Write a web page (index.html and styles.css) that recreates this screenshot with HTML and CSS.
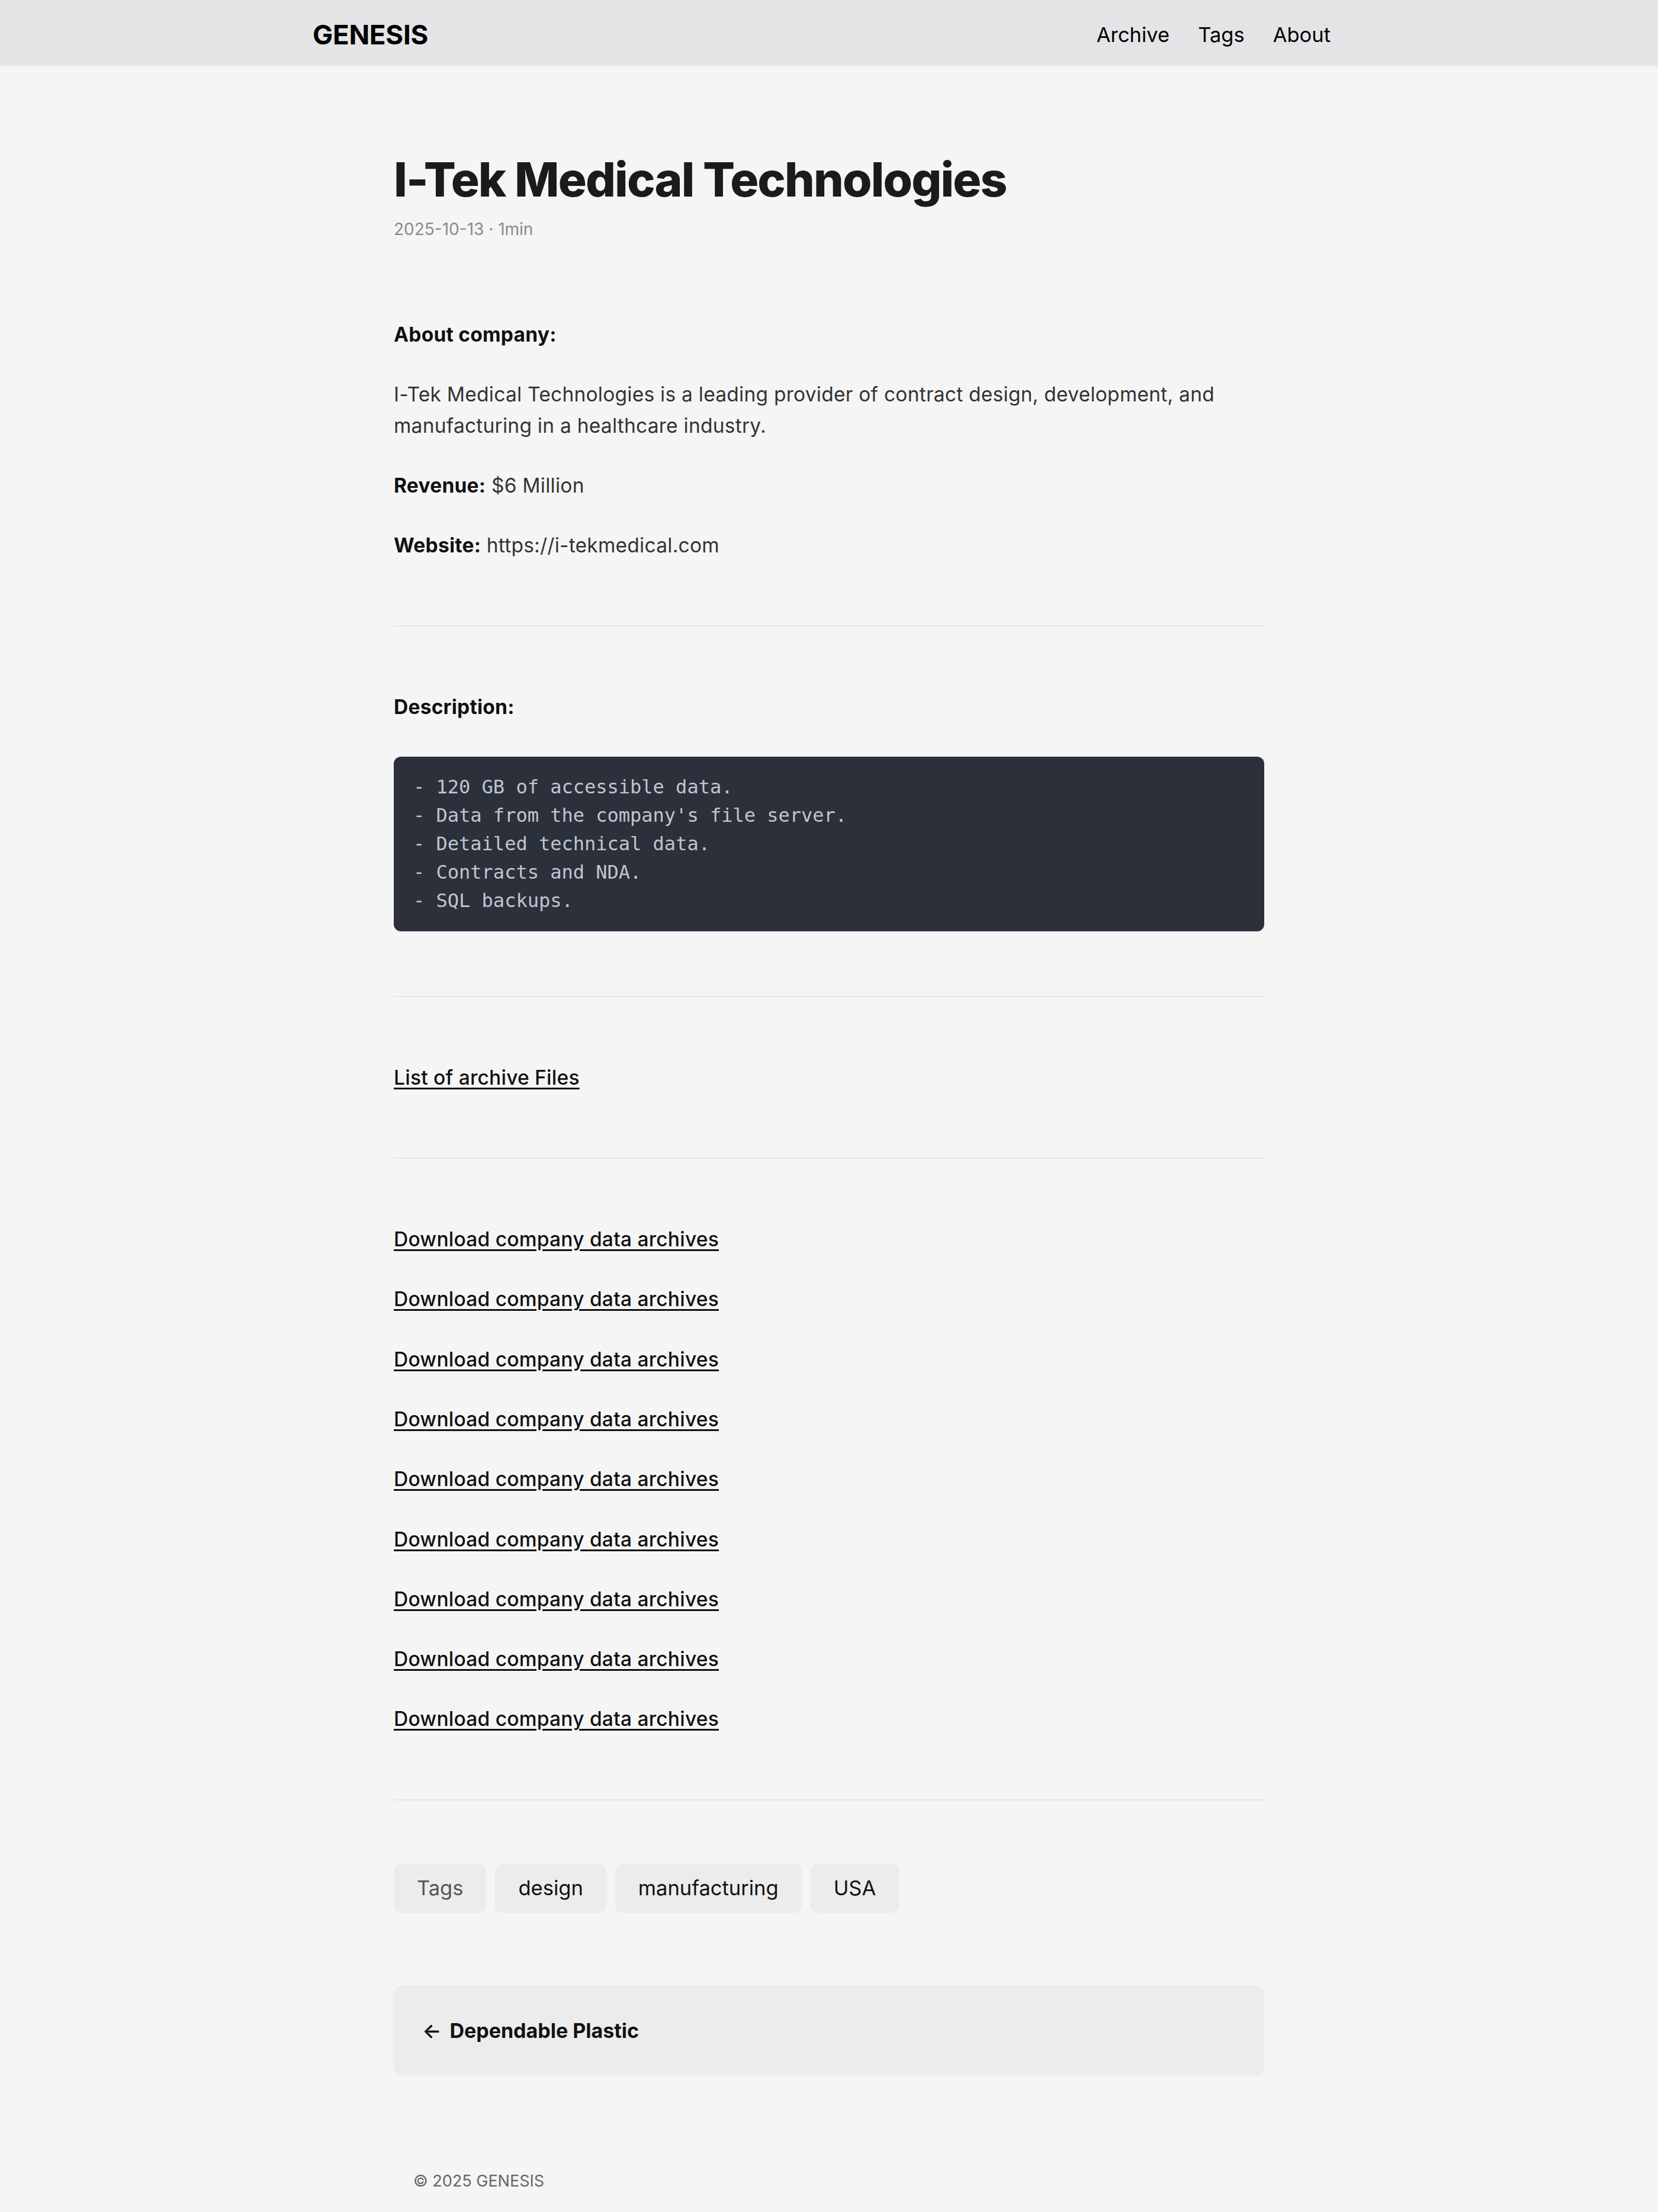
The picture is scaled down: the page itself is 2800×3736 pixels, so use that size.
FILE: index.html
```html
<!DOCTYPE html>
<html lang="en">
<head>
<meta charset="utf-8">
<title>I-Tek Medical Technologies | GENESIS</title>
<link rel="stylesheet" href="styles.css">
</head>
<body>
<header class="site-header">
  <nav class="nav">
    <a class="logo" href="#">GENESIS</a>
    <ul class="menu">
      <li><a href="#">Archive</a></li>
      <li><a href="#">Tags</a></li>
      <li><a href="#">About</a></li>
    </ul>
  </nav>
</header>

<main class="main">
  <article class="post">
    <header class="post-header">
      <h1 class="post-title">I-Tek Medical Technologies</h1>
      <div class="post-meta">2025-10-13&nbsp;·&nbsp;1min</div>
    </header>

    <div class="post-content">
      <p><strong>About company:</strong></p>
      <p>I-Tek Medical Technologies is a leading provider of contract design, development, and manufacturing in a healthcare industry.</p>
      <p><strong>Revenue:</strong> $6 Million</p>
      <p><strong>Website:</strong> https://i-tekmedical.com</p>
      <hr>
      <p><strong>Description:</strong></p>
      <pre class="code"><code>- 120 GB of accessible data.
- Data from the company's file server.
- Detailed technical data.
- Contracts and NDA.
- SQL backups.</code></pre>
      <hr>
      <p><a href="#">List of archive Files</a></p>
      <hr>
      <p><a href="#">Download company data archives</a></p>
      <p><a href="#">Download company data archives</a></p>
      <p><a href="#">Download company data archives</a></p>
      <p><a href="#">Download company data archives</a></p>
      <p><a href="#">Download company data archives</a></p>
      <p><a href="#">Download company data archives</a></p>
      <p><a href="#">Download company data archives</a></p>
      <p><a href="#">Download company data archives</a></p>
      <p><a href="#">Download company data archives</a></p>
      <hr>
    </div>

    <footer class="post-footer">
      <ul class="post-tags">
        <li class="tag-label">Tags</li>
        <li><a href="#">design</a></li>
        <li><a href="#">manufacturing</a></li>
        <li><a href="#">USA</a></li>
      </ul>
      <nav class="paginav">
        <a class="prev" href="#"><span class="arrow">←</span><span>Dependable Plastic</span></a>
      </nav>
    </footer>
  </article>
</main>

<footer class="site-footer">
  <span>© 2025 GENESIS</span>
</footer>
</body>
</html>
```

FILE: styles.css
```css
html {
  background: #f5f5f5;
}

body {
  margin: 0;
  background: #f5f5f5;
  font-family: Inter, "Noto Sans", "Liberation Sans", sans-serif;
  color: #1e1e1e;
}

a {
  color: inherit;
  text-decoration: none;
}

/* ---------- site header ---------- */
.site-header {
  height: 110px;
  box-sizing: border-box;
  padding-top: 6px;
  background: #e4e4e6;
  box-shadow: 0 2px 6px rgba(0, 0, 0, 0.05);
  display: flex;
  align-items: center;
}

.nav {
  width: 1744px;
  margin: 0 auto;
  padding-right: 25px;
  box-sizing: border-box;
  display: flex;
  align-items: center;
  justify-content: space-between;
}

.logo {
  font-size: 45.5px;
  font-weight: 700;
  color: #000;
  letter-spacing: -0.2px;
}

.menu {
  list-style: none;
  margin: 0;
  padding: 0;
  display: flex;
  gap: 48px;
}

.menu a {
  font-size: 34.5px;
  color: #000;
}

/* ---------- main ---------- */
.main {
  width: 1470px;
  margin: 0 auto;
  padding-top: 141px;
}

.post-title {
  margin: 0;
  font-size: 80px;
  line-height: 104px;
  font-weight: 800;
  letter-spacing: -1.85px;
  color: #1b1b1b;
}

.post-meta {
  margin-top: 12px;
  font-size: 28px;
  line-height: 40px;
  color: #8a8a8a;
}

.post-content {
  margin-top: 132px;
  font-size: 33.5px;
  line-height: 52.3px;
  letter-spacing: 0.25px;
  color: #333;
}

.post-content p {
  margin: 0 0 49px;
}

.post-content strong {
  font-weight: 650;
  color: #111;
}

.post-content a {
  color: #111;
  font-weight: 500;
  text-decoration: underline;
  text-decoration-thickness: 3px;
  text-underline-offset: 5px;
}

.post-content hr {
  border: 0;
  height: 2px;
  background: #e6e6e6;
  margin: 109px 0 110px;
}

.post-content hr:last-child {
  margin-bottom: 0;
}

.code {
  margin: 57px 0 0;
  padding: 27px 33px 28px;
  background: #2b303b;
  border-radius: 12px;
  font-family: "DejaVu Sans Mono", "Liberation Mono", monospace;
  font-size: 32px;
  line-height: 48px;
  letter-spacing: 0;
  color: #c0c5ce;
  overflow: hidden;
}

/* ---------- post footer ---------- */
.post-footer {
  margin-top: 107px;
}

.post-tags {
  list-style: none;
  margin: 0;
  padding: 0;
  display: flex;
  gap: 15px;
}

.post-tags li {
  height: 82px;
  padding: 0 39px;
  display: flex;
  align-items: center;
  background: #ececec;
  border-radius: 12px;
  font-size: 34.5px;
  color: #111;
  box-shadow: 0 1px 2px rgba(0, 0, 0, 0.03);
}

.post-tags li.tag-label {
  color: #555;
}

.paginav {
  margin-top: 124px;
}

.paginav .prev {
  height: 151px;
  box-sizing: border-box;
  padding-left: 48px;
  display: flex;
  align-items: center;
  gap: 14px;
  background: #ececec;
  border-radius: 14px;
  font-size: 34px;
  font-weight: 650;
  color: #111;
  box-shadow: 0 1px 3px rgba(0, 0, 0, 0.04);
}

.paginav .arrow {
  font-weight: 600;
}

/* ---------- site footer ---------- */
.site-footer {
  width: 1470px;
  margin: 0 auto;
  box-sizing: border-box;
  padding: 159px 0 30px 33px;
  font-size: 27px;
  line-height: 40px;
  color: #666;
}
```
